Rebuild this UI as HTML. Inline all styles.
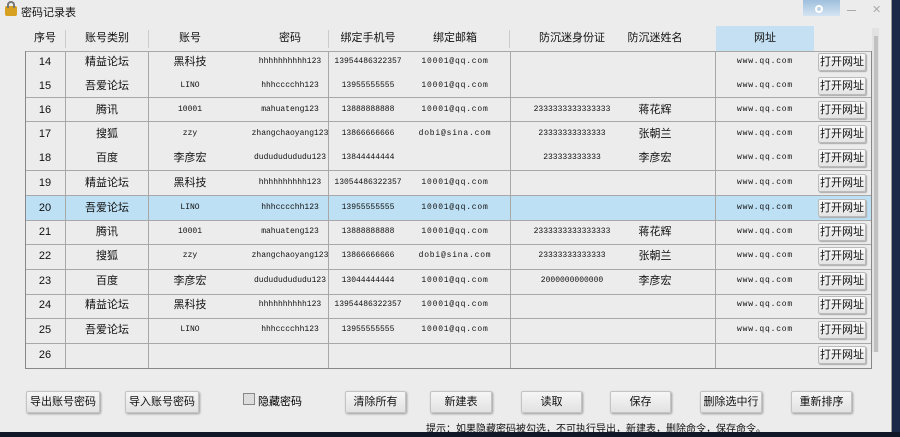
<!DOCTYPE html>
<html><head><meta charset="utf-8"><style>
*{margin:0;padding:0;box-sizing:border-box}
body{width:900px;height:437px;overflow:hidden;background:#1c2a4a;font-family:"Liberation Sans","Noto Sans CJK SC",sans-serif;position:relative}
#win{position:absolute;left:0;top:0;width:892px;height:432px;background:#ececec;border-right:1px solid #999}
.a{position:absolute}
.t{position:absolute;font-size:11px;color:#111;white-space:nowrap;transform:translateX(-50%);line-height:14px}
.m{font-family:"Liberation Mono","Noto Sans CJK SC",monospace;font-size:8px;line-height:14px}
.e{letter-spacing:0.8px}
.hl{position:absolute;left:26px;width:845px;height:1px;background:#a8a8a8}
.vl{position:absolute;top:51px;width:1px;height:317px;background:#a8a8a8}
.ob{position:absolute;left:818px;width:48px;height:18px;background:linear-gradient(#fafafa,#e4e4e4);border:1px solid #bbb;border-radius:2px;font-size:11px;text-align:center;line-height:16px;color:#111;box-shadow:1px 1px 1px #aaa;white-space:nowrap;overflow:hidden}
.bt{position:absolute;top:391px;height:22px;background:linear-gradient(#f6f6f6,#e2e2e2);border:1px solid #c4c4c4;border-radius:2px;font-size:11px;text-align:center;line-height:20px;color:#111;box-shadow:1px 1px 2px #999;white-space:nowrap}
</style></head><body>
<div id="win">
<div class="a" style="left:5px;top:6px;width:12px;height:10px;background:#d8a020;border-radius:2px"></div>
<div class="a" style="left:7px;top:1px;width:8px;height:7px;border:2px solid #777;border-bottom:none;border-radius:4px 4px 0 0"></div>
<div class="a" style="left:21px;top:4px;font-size:11px;color:#111">密码记录表</div>
<div class="a" style="left:803px;top:0;width:37px;height:16px;background:linear-gradient(#9fbfdc,#d4e4f2)"></div>
<div class="a" style="left:815px;top:5px;width:8px;height:8px;border:2px solid #fff;border-radius:50%"></div>
<div class="a" style="left:847px;top:10px;width:9px;height:1px;background:#aaa"></div>
<div class="a" style="left:872px;top:3px;font-size:11px;color:#aaa">✕</div>
<div class="a" style="left:716px;top:26px;width:98px;height:25px;background:#c4e0f2"></div>
<div class="a" style="left:26px;top:195px;width:845px;height:25px;background:#bde0f4"></div>
<div class="a" style="left:25px;top:51px;width:847px;height:318px;border:1px solid #888;border-top:none"></div>
<div class="a" style="left:872px;top:28px;width:7px;height:324px;background:#e2e2e2"></div>
<div class="a" style="left:874px;top:36px;width:4px;height:316px;background:#c0c0c0"></div>
<div class="hl" style="top:51px"></div><div class="hl" style="top:97px"></div><div class="hl" style="top:121px"></div><div class="hl" style="top:170px"></div><div class="hl" style="top:195px"></div><div class="hl" style="top:220px"></div><div class="hl" style="top:244px"></div><div class="hl" style="top:269px"></div><div class="hl" style="top:294px"></div><div class="hl" style="top:318px"></div><div class="hl" style="top:343px"></div>
<div class="vl" style="left:65px"></div><div class="vl" style="left:148px"></div><div class="vl" style="left:328px"></div><div class="vl" style="left:510px"></div><div class="vl" style="left:715px"></div>
<div class="a" style="left:65px;top:30px;width:1px;height:18px;background:#ccc"></div><div class="a" style="left:148px;top:30px;width:1px;height:18px;background:#ccc"></div><div class="a" style="left:328px;top:30px;width:1px;height:18px;background:#ccc"></div><div class="a" style="left:509px;top:30px;width:1px;height:18px;background:#ccc"></div>
<div class="t" style="left:45px;top:31px">序号</div><div class="t" style="left:107px;top:31px">账号类别</div><div class="t" style="left:190px;top:31px">账号</div><div class="t" style="left:290px;top:31px">密码</div><div class="t" style="left:368px;top:31px">绑定手机号</div><div class="t" style="left:455px;top:31px">绑定邮箱</div><div class="t" style="left:572px;top:31px">防沉迷身份证</div><div class="t" style="left:655px;top:31px">防沉迷姓名</div><div class="t" style="left:765px;top:31px">网址</div>

<div id="rows"></div>
<div class="bt" style="left:26px;width:74px">导出账号密码</div>
<div class="bt" style="left:125px;width:74px">导入账号密码</div>
<div class="a" style="left:243px;top:393px;width:12px;height:12px;border:1px solid #888;background:#ddd"></div>
<div class="a" style="left:258px;top:393px;font-size:11px">隐藏密码</div>
<div class="bt" style="left:345px;width:61px">清除所有</div>
<div class="bt" style="left:430px;width:62px">新建表</div>
<div class="bt" style="left:521px;width:61px">读取</div>
<div class="bt" style="left:610px;width:61px">保存</div>
<div class="bt" style="left:700px;width:62px">删除选中行</div>
<div class="bt" style="left:791px;width:61px">重新排序</div>
<div class="a" style="left:426px;top:420px;font-size:10px;color:#111;white-space:nowrap">提示：如果隐藏密码被勾选，不可执行导出，新建表，删除命令，保存命令。</div>
</div>
<div class="a" style="left:0;top:432px;width:900px;height:5px;background:#101828"></div>
<script>
var d=[
[62,'14','精益论坛','黑科技','hhhhhhhhhh123','13954486322357','10001@qq.com','',''],
[86,'15','吾爱论坛','LINO','hhhcccchh123','13955555555','10001@qq.com','',''],
[110,'16','腾讯','10001','mahuateng123','13888888888','10001@qq.com','2333333333333333','蒋花辉'],
[134,'17','搜狐','zzy','zhangchaoyang123','13866666666','dobi@sina.com','23333333333333','张朝兰'],
[158,'18','百度','李彦宏','dudududududu123','13844444444','','233333333333','李彦宏'],
[183,'19','精益论坛','黑科技','hhhhhhhhhh123','13054486322357','10001@qq.com','',''],
[208,'20','吾爱论坛','LINO','hhhcccchh123','13955555555','10001@qq.com','',''],
[232,'21','腾讯','10001','mahuateng123','13888888888','10001@qq.com','2333333333333333','蒋花辉'],
[256,'22','搜狐','zzy','zhangchaoyang123','13866666666','dobi@sina.com','23333333333333','张朝兰'],
[281,'23','百度','李彦宏','dudududududu123','13044444444','10001@qq.com','2000000000000','李彦宏'],
[305,'24','精益论坛','黑科技','hhhhhhhhhh123','13954486322357','10001@qq.com','',''],
[330,'25','吾爱论坛','LINO','hhhcccchh123','13955555555','10001@qq.com','',''],
[355,'26','','','','','','','']];
var xs=[45,107,190,290,368,455,572,655],h='';
d.forEach(function(r){var y=r[0]-7;
for(var i=1;i<9;i++){if(r[i]){var cjk=/[^\x00-\x7f]/.test(r[i]);var c=(i==1||cjk)?'':(i==6?' m e':' m');h+='<div class="t'+c+'" style="left:'+xs[i-1]+'px;top:'+y+'px">'+r[i]+'</div>';}}
if(r[1]!='26')h+='<div class="t m e" style="left:765px;top:'+y+'px">www.qq.com</div>';
h+='<div class="ob" style="top:'+(r[0]-9)+'px">打开网址</div>';});
document.getElementById('rows').innerHTML=h;
</script>
</body></html>
